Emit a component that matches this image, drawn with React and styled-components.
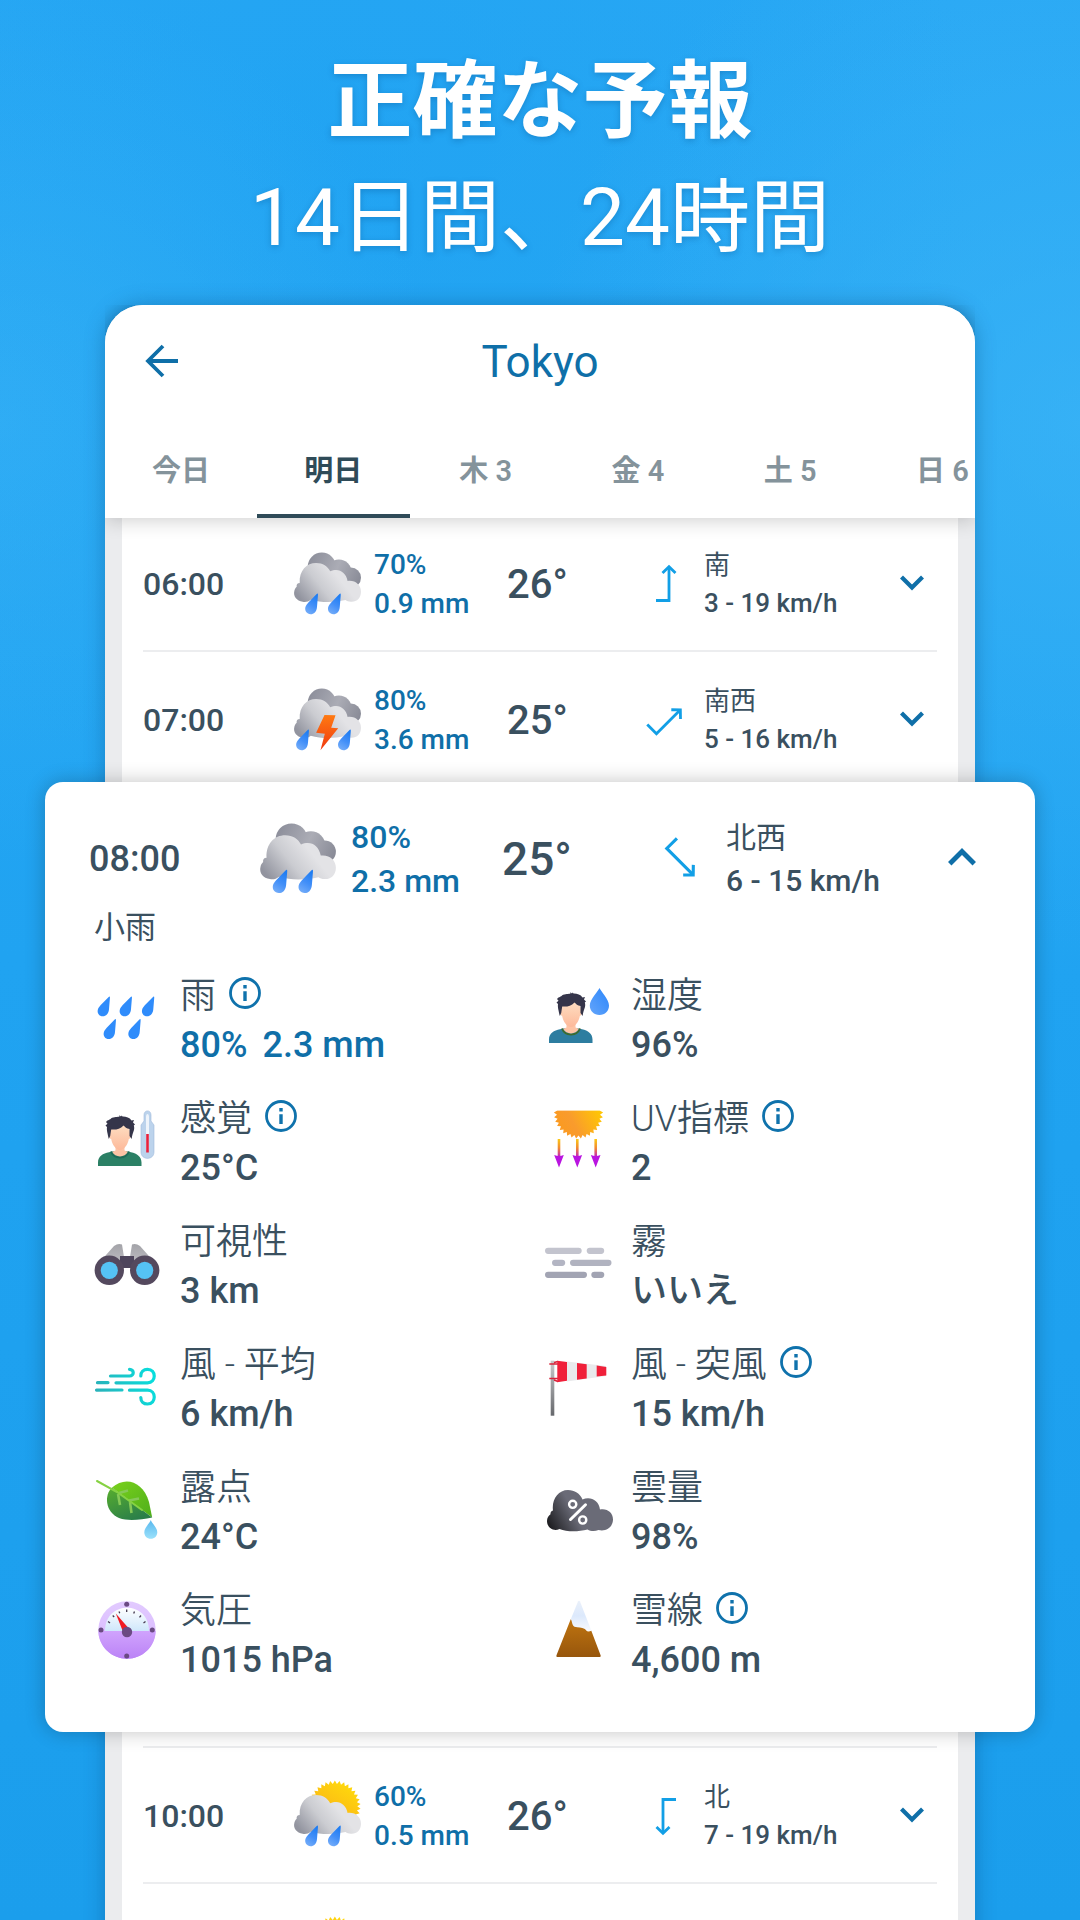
import React, { useState } from "react";
import styled, { createGlobalStyle } from "styled-components";

const GlobalStyle = createGlobalStyle`
  * {
    box-sizing: border-box;
  }

  body {
    margin: 0;
    font-family: Roboto, "Noto Sans CJK JP", sans-serif;
    color: #3a505f;
  }

  h1, h2, p, ul, dl, dt, dd {
    margin: 0;
    padding: 0;
    font-weight: inherit;
  }

  button {
    padding: 0;
    border: 0;
    background: none;
    color: inherit;
    font: inherit;
    cursor: pointer;
  }

  svg {
    display: block;
    overflow: visible;
  }
`;

const Page = styled.div`
  display: flex;
  flex-direction: column;
  height: 100vh;
  padding: 0 105px;
  overflow: hidden;
  background:
    radial-gradient(circle at 100% 22%, rgba(65, 184, 247, 0.6), transparent 30%),
    radial-gradient(circle at 0 22%, rgba(65, 184, 247, 0.4), transparent 24%),
    radial-gradient(circle at 30% 8%, rgba(24, 158, 240, 0.4), transparent 34%),
    linear-gradient(#29a8f4, #20a3f1 50%, #1b9eec);
`;

const Headline = styled.header`
  padding-top: 45px;
  color: #fff;
  text-align: center;
  text-shadow: 0 2px 6px rgba(0, 70, 130, 0.3);

  h1 {
    font-size: 85px;
    font-weight: 700;
    line-height: 114px;
  }

  p {
    font-size: 80px;
    font-weight: 400;
    line-height: 119px;
  }
`;

const Phone = styled.main`
  flex: none;
  margin-top: 27px;
  border-radius: 38px 38px 0 0;
  background: #ebecee;
  box-shadow: 0 0 20px rgba(0, 60, 110, 0.35);
`;

const TopPanel = styled.div`
  overflow: hidden;
  border-radius: 38px 38px 0 0;
  background: #fff;
`;

const PanelShadow = styled.div`
  position: relative;
  z-index: 1;
  border-radius: 38px 38px 0 0;
  box-shadow: 0 2px 20px rgba(0, 0, 0, 0.2);
  clip-path: inset(0 0 -24px 0);
`;

const TitleBar = styled.div`
  display: grid;
  grid-template-columns: 38px 1fr 38px;
  align-items: center;
  height: 117px;
  padding: 0 38px 4px;
  color: #0f6fa8;

  h2 {
    font-size: 44px;
    line-height: 56px;
    text-align: center;
  }
`;

const Tabs = styled.div`
  display: flex;
  height: 96px;
`;

const Tab = styled.button`
  && {
    flex: 0 0 17.5%;
    padding-bottom: 1px;
    border-bottom: 4px solid ${(props) => (props.$active ? "#2f4b58" : "transparent")};
    color: ${(props) => (props.$active ? "#2f4b58" : "#84939b")};
    font-size: 29px;
    font-weight: ${(props) => (props.$active ? 700 : 600)};
    white-space: nowrap;
  }
`;

const HourList = styled.ul`
  margin: 0 17px;
  padding: 0 21px;
  list-style: none;
  background: #fff;
`;

const UpperHours = styled(HourList)`
  margin-top: -2px;
`;

const LowerHours = styled(HourList)`
  padding-top: 16px;
`;

const HourItem = styled.li`
  height: 136px;
  border-bottom: 2px solid #ecedef;

  &:last-child {
    border-bottom-color: transparent;
  }

  ${LowerHours} &:first-child {
    box-shadow: 0 -2px 0 #ecedef;
  }
`;

const HourRow = styled.div`
  display: grid;
  align-items: center;
  grid-template-columns: ${(props) =>
    props.$large
      ? "171px 91px 151px 159px 65px 1fr 43px"
      : "151px 80px 133px 140px 57px 1fr 37px"};
  height: 136px;
`;

const Time = styled.span`
  font-size: ${(props) => (props.$large ? 36 : 32)}px;
  font-weight: 500;
`;

const Precip = styled.span`
  display: flex;
  flex-direction: column;
  color: #0f6fa8;
  font-size: ${(props) => (props.$large ? 32 : 28)}px;
  font-weight: 500;
  line-height: ${(props) => (props.$large ? 44 : 39)}px;
`;

const Temp = styled.span`
  font-size: ${(props) => (props.$large ? 46 : 40)}px;
  font-weight: 500;
`;

const Wind = styled.span`
  display: flex;
  flex-direction: column;
  font-size: ${(props) => (props.$large ? 30 : 26)}px;
  font-weight: 500;
  line-height: ${(props) => (props.$large ? 43 : 38)}px;
`;

const WindFrom = styled.span`
  font-weight: 400;
`;

const Toggle = styled.button`
  && {
    color: #0f6fa8;
  }
`;

const HourCard = styled.section`
  position: relative;
  z-index: 2;
  margin: -6px -60px 0;
  padding: 9px 44px 35px;
  border-radius: 18px;
  background: #fff;
  box-shadow: 0 0 20px rgba(0, 0, 0, 0.24);
`;

const Condition = styled.p`
  && {
    margin-top: -22px;
    padding: 0 5px;
    font-size: 31px;
    line-height: 46px;
  }
`;

const Details = styled.dl`
  && {
    display: grid;
    grid-template-columns: 1fr 1fr;
    grid-auto-rows: 123px;
    margin-top: 8px;
  }
`;

const Detail = styled.div`
  display: grid;
  grid-template-columns: 72px 1fr;
  align-items: center;
  gap: 19px;
`;

const DetailIcon = styled.svg`
  width: 72px;
  height: 72px;
  margin-bottom: 2px;
`;

const DetailLabel = styled.dt`
  && {
    display: flex;
    align-items: center;
    gap: 13px;
    font-size: 36px;
    font-weight: 350;
    line-height: 50px;
  }
`;

const DetailValue = styled.dd`
  && {
    display: flex;
    gap: 15px;
    color: ${(props) => (props.$blue ? "#0f6fa8" : "inherit")};
    font-size: 36px;
    font-weight: 500;
    line-height: 49px;
  }
`;

const InfoButton = styled.button`
  && {
    padding-bottom: 6px;
    color: #0f72ac;
  }
`;

// Points of a toothed ring, used for the sun outline
function toothedRing(cx, cy, inner, outer, teeth, from = 0, to = 360) {
  const steps = teeth * 2;
  const points = [];
  for (let i = 0; i <= steps; i++) {
    const angle = ((from + ((to - from) * i) / steps) * Math.PI) / 180;
    const r = i % 2 ? outer : inner;
    points.push(
      `${(cx + r * Math.cos(angle)).toFixed(1)},${(cy + r * Math.sin(angle)).toFixed(1)}`
    );
  }
  return points.join(" ");
}

const DefsHolder = styled.svg`
  position: absolute;
`;

function Gradients() {
  return (
    <DefsHolder width='0' height='0' aria-hidden='true'>
      <defs>
        <linearGradient id='cloudFront' gradientUnits='userSpaceOnUse' x1='20' y1='140' x2='120' y2='60'>
          <stop offset='0' stopColor='#92949f' />
          <stop offset='0.55' stopColor='#cbccd1' />
          <stop offset='1' stopColor='#e3e3e6' />
        </linearGradient>
        <linearGradient id='cloudBack' gradientUnits='userSpaceOnUse' x1='50' y1='20' x2='200' y2='90'>
          <stop offset='0' stopColor='#8e909c' />
          <stop offset='0.5' stopColor='#abacb5' />
          <stop offset='1' stopColor='#878995' />
        </linearGradient>
        <linearGradient id='drop' x1='0.2' y1='1' x2='0.6' y2='0'>
          <stop offset='0' stopColor='#76aef9' />
          <stop offset='0.5' stopColor='#428ff8' />
          <stop offset='1' stopColor='#1f7df2' />
        </linearGradient>
        <linearGradient id='waterDrop' x1='0' y1='1' x2='1' y2='0'>
          <stop offset='0' stopColor='#64a5fa' />
          <stop offset='1' stopColor='#2b86fb' />
        </linearGradient>
        <linearGradient id='dewDrop' x1='0' y1='0' x2='0' y2='1'>
          <stop offset='0' stopColor='#58b8ee' />
          <stop offset='1' stopColor='#9be1fb' />
        </linearGradient>
        <linearGradient id='sun' x1='0.8' y1='0' x2='0.2' y2='1'>
          <stop offset='0' stopColor='#ffdc0b' />
          <stop offset='1' stopColor='#f9a51c' />
        </linearGradient>
        <linearGradient id='uvSun' x1='0' y1='0.6' x2='1' y2='0.3'>
          <stop offset='0' stopColor='#fb9a1d' />
          <stop offset='0.4' stopColor='#f99b2d' />
          <stop offset='1' stopColor='#ffc505' />
        </linearGradient>
        <linearGradient id='uvRay' x1='0' y1='0' x2='0' y2='1'>
          <stop offset='0' stopColor='#fbc916' />
          <stop offset='0.5' stopColor='#f28a30' />
          <stop offset='1' stopColor='#c21fc0' />
        </linearGradient>
        <linearGradient id='bolt' x1='0' y1='0' x2='0' y2='1'>
          <stop offset='0' stopColor='#ff7a12' />
          <stop offset='1' stopColor='#f03a10' />
        </linearGradient>
        <linearGradient id='face' x1='0' y1='0' x2='0' y2='1'>
          <stop offset='0' stopColor='#fedfc3' />
          <stop offset='1' stopColor='#fdb99a' />
        </linearGradient>
        <linearGradient id='barrel' x1='0' y1='0' x2='0' y2='1'>
          <stop offset='0' stopColor='#a3a3a8' />
          <stop offset='1' stopColor='#c4c2c8' />
        </linearGradient>
        <linearGradient id='wind' gradientUnits='userSpaceOnUse' x1='5' y1='40' x2='66' y2='24'>
          <stop offset='0' stopColor='#2bb0b8' />
          <stop offset='1' stopColor='#08dedd' />
        </linearGradient>
        <linearGradient id='leafTop' x1='0' y1='0' x2='1' y2='1'>
          <stop offset='0' stopColor='#79d11c' />
          <stop offset='1' stopColor='#4fae1b' />
        </linearGradient>
        <linearGradient id='leafBottom' x1='0' y1='0' x2='0.6' y2='1'>
          <stop offset='0' stopColor='#58ae2d' />
          <stop offset='1' stopColor='#2b7f49' />
        </linearGradient>
        <linearGradient id='gauge' x1='0' y1='0' x2='0' y2='1'>
          <stop offset='0' stopColor='#e2cbff' />
          <stop offset='0.5' stopColor='#dcbfff' />
          <stop offset='1' stopColor='#be8af8' />
        </linearGradient>
        <linearGradient id='gaugeLow' x1='0' y1='0' x2='0' y2='1'>
          <stop offset='0' stopColor='#d0a3fd' />
          <stop offset='1' stopColor='#bb83f6' />
        </linearGradient>
        <linearGradient id='dial' x1='0' y1='0' x2='0' y2='1'>
          <stop offset='0' stopColor='#fff' />
          <stop offset='1' stopColor='#cfe7fb' />
        </linearGradient>
        <linearGradient id='pole' x1='0' y1='0' x2='0' y2='1'>
          <stop offset='0' stopColor='#c9cacc' />
          <stop offset='1' stopColor='#66686c' />
        </linearGradient>
        <linearGradient id='darkCloud' gradientUnits='userSpaceOnUse' x1='8' y1='50' x2='34' y2='36'>
          <stop offset='0' stopColor='#1b1b1e' />
          <stop offset='1' stopColor='#6a6b77' />
        </linearGradient>
        <linearGradient id='rock' x1='0' y1='0' x2='0' y2='1'>
          <stop offset='0' stopColor='#bf7410' />
          <stop offset='1' stopColor='#97560c' />
        </linearGradient>
        <linearGradient id='snow' x1='0' y1='0' x2='0' y2='1'>
          <stop offset='0' stopColor='#eaf0fa' />
          <stop offset='0.5' stopColor='#dce9fc' />
          <stop offset='1' stopColor='#f8fafe' />
        </linearGradient>
      </defs>
    </DefsHolder>
  );
}

function SlantDrop({ x, y, scale = 1, fill = "url(#drop)" }) {
  return (
    <path
      transform={`translate(${x} ${y}) scale(${scale})`}
      fill={fill}
      d='M12 .1C12.500 .2 12.500 1 12.400 2L11.500 13C11.100 17.700 8.400 20 5.400 20C1.600 20 -.5 16.800 .3 13.400C.8 11.400 2.100 10.200 3 9L11.200 .6Q11.600 0 12 .1Z'
    />
  );
}

function WeatherIcon({ type, size }) {
  return (
    <svg width={size} height={Math.round(size * 0.95)} viewBox='0 0 200 190' aria-hidden='true'>
      {type === "sun" ? (
        <polygon points={toothedRing(122, 66, 67, 77, 34)} fill='url(#sun)' />
      ) : (
        <g fill='url(#cloudBack)'>
          <circle cx='83' cy='43' r='42' />
          <circle cx='134' cy='60' r='38' />
          <circle cx='170' cy='76' r='30' />
          <path d='M70 60H180V105H100Z' />
        </g>
      )}
      <path
        fill='url(#cloudFront)'
        d='M17 92C15 54 38 32 66 32C86 32 101 42 108 57C114 54 120 53 126 53C142 53 156 65 160 86C183 83 200 98 200 118C200 136 188 149 170 148C163 148 158 146 154 143C122 150 84 152 50 142C43 148 34 150 26 148C8 146 -3 131 1 116C2 110 5 106 8 103C7 97 10 92 17 92Z'
      />
      {type === "storm" ? (
        <>
          <SlantDrop x={6} y={123} scale={3.1} />
          <SlantDrop x={131} y={123} scale={3.1} />
          <path fill='url(#bolt)' d='M91 80L124 81L111 118L132 120L79 185L92 136L66 133Z' />
        </>
      ) : (
        <>
          <SlantDrop x={33} y={123} scale={3.1} />
          <SlantDrop x={101} y={123} scale={3.1} />
        </>
      )}
    </svg>
  );
}

function WindArrow({ angle, size }) {
  return (
    <svg width={size} height={size} viewBox='0 0 38 38' aria-hidden='true'>
      <g
        transform={`rotate(${angle} 19 19)`}
        fill='none'
        stroke='#129fe6'
        strokeWidth='2.800'
      >
        <path d='M9 35.500H22V2' />
        <path d='M15.500 8L22 1.700L28.500 8' />
      </g>
    </svg>
  );
}

function Chevron({ up, size }) {
  return (
    <svg width={size} height={size} viewBox='0 0 24 24' fill='none' stroke='currentColor' strokeWidth='4.200'>
      <path d={up ? "M1.500 16L12 5.500L22.500 16" : "M1.500 5L12 15.500L22.500 5"} />
    </svg>
  );
}

function BackArrow() {
  return (
    <svg width='38' height='38' viewBox='0 0 38 38' fill='none' stroke='currentColor' strokeWidth='3.800'>
      <path d='M35 18H6M20 3L5 18L20 33' />
    </svg>
  );
}

function InfoIcon() {
  return (
    <svg width='32' height='32' viewBox='0 0 32 32' aria-hidden='true'>
      <circle cx='16' cy='16' r='14.500' fill='none' stroke='currentColor' strokeWidth='2.800' />
      <path d='M14.300 8H17.700V11.400H14.300ZM14.300 14.300H17.700V24H14.300Z' fill='currentColor' />
    </svg>
  );
}

function Person({ shirt, collar }) {
  return (
    <g>
      <path
        fill={shirt}
        d='M9 59V55.500C9 49 14 46.500 20 45.200L24 44.200H38L42 45.200C48 46.500 52.500 49.500 52.500 55.500V59Z'
      />
      <path fill='none' stroke={collar} strokeWidth='1.800' d='M22 44.500C25 52.500 37 52.500 40 44.500' />
      <path fill='#fdc3a4' d='M26.500 37H35.500V43.500L38.800 44.800C36 51 26 51 23.200 44.800L26.500 43.500Z' />
      <path
        fill='url(#face)'
        d='M21 26C19 27 20 31.500 22.200 32C23 37.500 27 43 31 43C35 43 39 37.500 39.800 32C42 31.500 43 27 41 26C41 14 21 14 21 26Z'
      />
      <path
        fill='#35354a'
        d='M17 15C19 12.500 21 13 22 11.500C25 9.500 29 10.200 30.500 9.500L30.200 8.200L32 9.500L32.700 8.400L33.500 9.600C37 9.500 40.500 10.500 42.500 13.500L45 13L44 15.500L46 17.500L44.800 18.500C46.300 23 43.500 25 42.700 32L40.500 29V22C37.500 21.500 36 20 34.500 18.500C31 22 27 23 22.200 22.500L21.200 29L19.800 32C18.500 26 17.500 23 18 20L16.500 18.500L18.500 16.800Z'
      />
    </g>
  );
}

const detailDrawings = {
  rain: (
    <g>
      <SlantDrop x={8.5} y={12.3} fill='#2f8cfb' />
      <SlantDrop x={30.5} y={12.3} fill='#2f8cfb' />
      <SlantDrop x={52.8} y={12.3} fill='#2f8cfb' />
      <SlantDrop x={14.5} y={35} fill='#2f8cfb' />
      <SlantDrop x={39.2} y={35} fill='#2f8cfb' />
    </g>
  ),
  humidity: (
    <g>
      <Person shirt='#2d7da0' collar='#3d6b2c' />
      <path
        fill='url(#waterDrop)'
        d='M59.500 4C60.500 7 69 15 69 21.500C69 27 65 31 59.500 31C54 31 49.800 27 49.800 21.500C49.800 15 58.500 7 59.500 4Z'
      />
    </g>
  ),
  feels: (
    <g>
      <Person shirt='#2b8065' collar='#1e6b58' />
      <path
        fill='#bcd3ec'
        stroke='#9fbbdc'
        strokeWidth='0.600'
        d='M55 8C55 2.500 62 2.500 62 8V14L65 18V45C65 53.500 52 53.500 52 45V18L55 14Z'
      />
      <path fill='#eef4fb' d='M57 10C57 6 60 6 60 10V43H57Z' />
      <path stroke='#e7213c' strokeWidth='2.600' d='M58.500 27V45.500' />
    </g>
  ),
  visibility: (
    <g>
      <path fill='url(#barrel)' d='M9 34L25 16Q29 13 33 14.500L35 27L30 38ZM67 34L51 16Q47 13 43 14.500L41 27L46 38Z' />
      <path fill='#4e455c' d='M31 26H45V38H31Z' />
      <circle cx='20.300' cy='40.300' r='14.700' fill='#54495e' />
      <circle cx='55.700' cy='40.300' r='14.700' fill='#54495e' />
      <circle cx='20.300' cy='40.300' r='8.600' fill='#55c3f4' />
      <circle cx='55.700' cy='40.300' r='8.600' fill='#55c3f4' />
    </g>
  ),
  wind: (
    <g fill='none' stroke='url(#wind)' strokeWidth='3.200' strokeLinecap='round'>
      <path d='M21.500 23H40.500C45.500 23 45.500 16.300 40.500 16.300' />
      <path d='M8.500 29.700L19 29.600M27 29.800H58.500C67.500 29.800 67.500 16.300 58.500 16.300C54.500 16.300 51.800 19 51.800 23' />
      <path d='M7.500 37.100L33 37M40.500 37.200H58.500C67.500 37.200 67.500 51 58.500 51C54.500 51 51.800 48.500 51.800 44.500' />
    </g>
  ),
  dew: (
    <g>
      <path fill='url(#leafTop)' d='M23 11.500C36 0 54 5 60 26L63.200 41.500Z' />
      <path fill='url(#leafBottom)' d='M23 11.500C15 19 16 36 30 42C40 45.500 52 43.500 63.200 41.500Z' />
      <path
        fill='none'
        stroke='#85c957'
        strokeWidth='2.600'
        d='M29 18L31 29M41 26L42.500 37M30 17L39 14.500M40 24.500L50 22.500'
      />
      <path fill='none' stroke='#86d243' strokeWidth='2' strokeLinecap='round' d='M8 5L28 16L53 34' />
      <path
        fill='url(#dewDrop)'
        d='M61.800 44C62.500 47 68.300 51.500 68.300 56.200C68.300 60 65.500 62.700 61.800 62.700C58 62.700 55.300 60 55.300 56.200C55.300 51.500 61 47 61.800 44Z'
      />
    </g>
  ),
  pressure: (
    <g>
      <circle cx='38' cy='31' r='28.700' fill='url(#gauge)' />
      <path fill='url(#gaugeLow)' d='M9.300 32H66.700C66.200 48 53.500 59.700 38 59.700C22.500 59.700 9.800 48 9.300 32Z' />
      <path fill='url(#dial)' d='M16 32C16 1 60 1 60 32Z' />
      <path
        stroke='#44394f'
        strokeWidth='1.300'
        d='M19 22.500L21 24M23.700 16.500L25.200 18M30 12.500L30.800 14.300M37.700 10.500V13M45.500 12.500L44.700 14.500M52 16.500L50.500 18.300M56.500 22.500L54.500 24'
      />
      <path fill='#f11a22' d='M26.800 14.500L39 28.500L33.500 31.500Z' />
      <circle cx='38' cy='33' r='5.200' fill='#6b4a83' />
      <g fill='#6b4a83'>
        <circle cx='37.700' cy='5.300' r='2.500' />
        <circle cx='12' cy='31' r='2.500' />
        <circle cx='63.300' cy='31' r='2.500' />
        <circle cx='37.700' cy='57' r='2.500' />
      </g>
    </g>
  ),
  uv: (
    <g>
      <polygon points={toothedRing(38.5, 7, 21.5, 24.6, 18, -9, 189)} fill='url(#uvSun)' />
      <path fill='#fff' d='M10 0H68V3.300H10Z' />
      {[19, 37.3, 55.7].map((x) => (
        <g key={x} transform={`translate(${x} 0)`}>
          <rect x='-1.300' y='32' width='2.600' height='18' fill='url(#uvRay)' />
          <path fill='#b914e0' d='M-4.800 48Q0 50 4.800 48L0 60.500Z' />
        </g>
      ))}
    </g>
  ),
  fog: (
    <g>
      <rect x='5' y='17.700' width='36.700' height='6.200' rx='3.100' fill='#c3c4ce' />
      <rect x='46.700' y='17.700' width='17.500' height='6.200' rx='3.100' fill='#c3c4ce' />
      <rect x='12' y='29.700' width='13.200' height='6.200' rx='3.100' fill='#b3b5c3' />
      <rect x='30' y='29.700' width='41.500' height='6.200' rx='3.100' fill='#b1b3c0' />
      <rect x='5' y='41.700' width='42' height='6.200' rx='3.100' fill='#a2a4b3' />
      <rect x='51.300' y='41.700' width='13' height='6.200' rx='3.100' fill='#a2a4b3' />
    </g>
  ),
  gust: (
    <g>
      <rect x='10.700' y='7.700' width='3.600' height='55' fill='url(#pole)' />
      <path stroke='#d8223a' strokeWidth='1.600' fill='none' d='M9.300 11H18M9.300 25.500H18M14 9.500L18 8.500M14 27L18 28.500' />
      <path fill='#e9eaec' d='M27 8.500L66 13V23L27 28.500Z' />
      <path fill='#f0203a' d='M17.300 7.700L27 9V27.800L17.300 29.200ZM37 10L46.700 11.300V25.600L37 26.800ZM56.700 12.500L66.300 14V22.400L56.700 23.500Z' />
    </g>
  ),
  clouds: (
    <g>
      <path
        fill='url(#darkCloud)'
        d='M13 34.500C11.500 24 18 14 28 14C34.500 14 40 17.500 42.500 23.500C50 20 59 24 60 33.500C67 32 73 36.500 73 43.500C73 51 66 56 58.500 54C55 55.500 51 55.500 47.500 53.500C38 56 27 56 19.500 53C13.500 56 7 51.500 7 45C7 42 8.500 39.500 10.500 38.300C10.300 36.500 11 35 13 34.500Z'
      />
      <g fill='none' stroke='#fff'>
        <circle cx='32.700' cy='28.300' r='3.600' strokeWidth='2.400' />
        <circle cx='42.700' cy='44' r='3.600' strokeWidth='2.400' />
        <path d='M30.500 43.500L45.500 28.800' strokeWidth='3' strokeLinecap='round' />
      </g>
    </g>
  ),
  snow: (
    <g>
      <path fill='url(#snow)' d='M38 2.500Q39 1 40 2.500L51.500 32L30.500 28V21Z' />
      <path
        fill='url(#rock)'
        d='M30.700 20.300C32.500 22 31.500 26 34.500 27.700C38 28.500 42 28.500 44.300 29.800C46 30.800 46.500 32.500 48.500 32.500Q50 32.500 51.300 31.700L60.700 56.500Q61 58 59.500 58H17.500Q16 58 16.400 56.500Z'
      />
    </g>
  ),
};

const days = ["今日", "明日", "木 3", "金 4", "土 5", "日 6"];

const morningHours = [
  { time: "06:00", icon: "rain", chance: "70%", amount: "0.9 mm", temp: "26°", from: "南", speed: "3 - 19 km/h", angle: 0 },
  { time: "07:00", icon: "storm", chance: "80%", amount: "3.6 mm", temp: "25°", from: "南西", speed: "5 - 16 km/h", angle: 45 },
];

const selectedHour = {
  time: "08:00",
  icon: "rain",
  chance: "80%",
  amount: "2.3 mm",
  temp: "25°",
  from: "北西",
  speed: "6 - 15 km/h",
  angle: 135,
};

const laterHours = [
  { time: "10:00", icon: "sun", chance: "60%", amount: "0.5 mm", temp: "26°", from: "北", speed: "7 - 19 km/h", angle: 180 },
];

const details = [
  { icon: "rain", label: "雨", values: ["80%", "2.3 mm"], info: true, blue: true },
  { icon: "humidity", label: "湿度", values: ["96%"] },
  { icon: "feels", label: "感覚", values: ["25°C"], info: true },
  { icon: "uv", label: "UV指標", values: ["2"], info: true },
  { icon: "visibility", label: "可視性", values: ["3 km"] },
  { icon: "fog", label: "霧", values: ["いいえ"] },
  { icon: "wind", label: "風 - 平均", values: ["6 km/h"] },
  { icon: "gust", label: "風 - 突風", values: ["15 km/h"], info: true },
  { icon: "dew", label: "露点", values: ["24°C"] },
  { icon: "clouds", label: "雲量", values: ["98%"] },
  { icon: "pressure", label: "気圧", values: ["1015 hPa"] },
  { icon: "snow", label: "雪線", values: ["4,600 m"], info: true },
];

function Hour({ hour, large }) {
  return (
    <HourRow $large={large}>
      <Time $large={large}>{hour.time}</Time>
      <WeatherIcon type={hour.icon} size={large ? 76 : 67} />
      <Precip $large={large}>
        <span>{hour.chance}</span>
        <span>{hour.amount}</span>
      </Precip>
      <Temp $large={large}>{hour.temp}</Temp>
      <WindArrow angle={hour.angle} size={large ? 42 : 38} />
      <Wind $large={large}>
        <WindFrom>{hour.from}</WindFrom>
        <span>{hour.speed}</span>
      </Wind>
      <Toggle aria-label={hour.time} aria-expanded={!!large}>
        <Chevron up={large} size={large ? 28 : 24} />
      </Toggle>
    </HourRow>
  );
}

export default function App() {
  const [activeDay, setActiveDay] = useState("明日");

  return (
    <Page lang='ja'>
      <GlobalStyle />
      <Gradients />
      <Headline>
        <h1>正確な予報</h1>
        <p>14日間、24時間</p>
      </Headline>
      <Phone>
        <PanelShadow>
          <TopPanel>
            <TitleBar>
              <button aria-label='戻る'>
                <BackArrow />
              </button>
              <h2>Tokyo</h2>
            </TitleBar>
            <Tabs>
              {days.map((day) => (
                <Tab key={day} $active={day === activeDay} onClick={() => setActiveDay(day)}>
                  {day}
                </Tab>
              ))}
            </Tabs>
          </TopPanel>
        </PanelShadow>
        <UpperHours>
          {morningHours.map((hour) => (
            <HourItem key={hour.time}>
              <Hour hour={hour} />
            </HourItem>
          ))}
        </UpperHours>
        <HourCard>
          <Hour hour={selectedHour} large />
          <Condition>小雨</Condition>
          <Details>
            {details.map((item) => (
              <Detail key={item.label}>
                <DetailIcon viewBox='0 0 72 72' aria-hidden='true'>
                  {detailDrawings[item.icon]}
                </DetailIcon>
                <div>
                  <DetailLabel>
                    {item.label}
                    {item.info && (
                      <InfoButton aria-label={item.label}>
                        <InfoIcon />
                      </InfoButton>
                    )}
                  </DetailLabel>
                  <DetailValue $blue={item.blue}>
                    {item.values.map((value) => (
                      <span key={value}>{value}</span>
                    ))}
                  </DetailValue>
                </div>
              </Detail>
            ))}
          </Details>
        </HourCard>
        <LowerHours>
          {laterHours.map((hour) => (
            <HourItem key={hour.time}>
              <Hour hour={hour} />
            </HourItem>
          ))}
          <HourItem>
            <HourRow>
              <span />
              <WeatherIcon type='sun' size={67} />
            </HourRow>
          </HourItem>
        </LowerHours>
      </Phone>
    </Page>
  );
}
